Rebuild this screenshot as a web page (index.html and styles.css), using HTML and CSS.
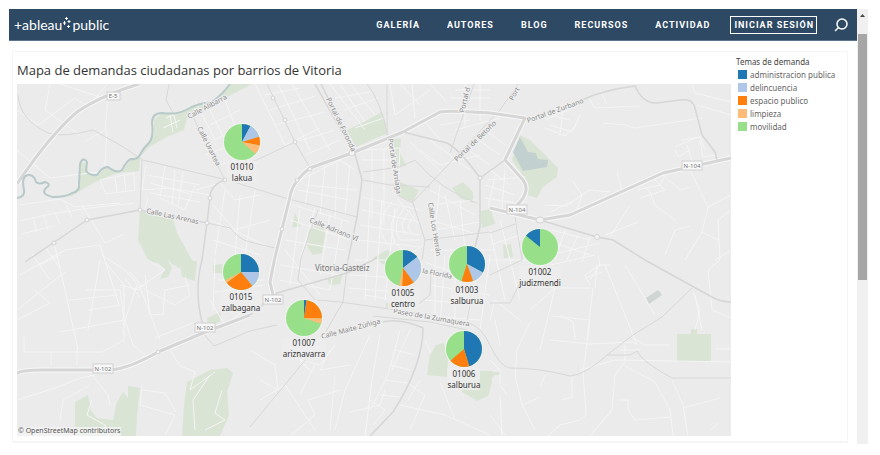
FILE: index.html
```html
<!DOCTYPE html>
<html lang="es">
<head>
<meta charset="utf-8">
<title>Mapa de demandas ciudadanas por barrios de Vitoria</title>
<link rel="stylesheet" href="styles.css">
</head>
<body>
<div class="window">
  <div class="page">
    <header class="topbar">
      <a class="logo" href="#"><span>+ableau</span><svg class="logo-dots" viewBox="0 0 8 12"><path d="M3.500 0v3M2 1.500h3M1.500 4v4M0 6h3M6 3v3M4.500 4.500h3M5.500 8v3M4 9.500h3"/></svg><span>public</span></a>
      <nav class="nav">
        <a href="#">GALERÍA</a>
        <a href="#">AUTORES</a>
        <a href="#">BLOG</a>
        <a href="#">RECURSOS</a>
        <a href="#">ACTIVIDAD</a>
      </nav>
      <button class="signin" type="button">INICIAR SESIÓN</button>
      <button class="search" type="button" aria-label="Buscar"><svg viewBox="0 0 14 14"><circle cx="8" cy="6" r="5"/><path d="M4.500 9.500L1 13"/></svg></button>
    </header>
    <main class="viz">
      <section class="sheet">
        <h1>Mapa de demandas ciudadanas por barrios de Vitoria</h1>
        <svg class="map" viewBox="17 84 714 352" role="img" aria-label="Mapa de Vitoria-Gasteiz">
          <rect class="land" x="17" y="84" width="714" height="352"/>
          <g class="park">
            <path d="M56 197L72 193L79 186L81 163L87 163L88 173L98 175L107 167L122 172L130 160L140 158L139 171L117 173L93 183L72 196Z"/>
            <path d="M140 157L146 146L154 134L154 120L162 113L180 113L197 105L217 100L230 84L252 84L187 118L184 130L167 137L149 147Z"/>
            <path d="M140 210L173 218L177 233L192 260L197 262L195 281L182 277L181 269L172 264L167 258L172 268L168 277L160 279L165 269L158 263L149 262L138 240Z"/>
            <path d="M75 402L88 395L91 410L97 418L113 420L117 402L123 392L128 398L128 386L140 388L137 415L136 436H75Z"/>
            <path d="M187 382L210 370L227 368L233 373L227 392L229 415L220 436H182L184 405Z"/>
            <path d="M347 130L360 124L382 112L388 133L356 147Z"/>
            <path d="M393 138L401 139L400 152L406 166L397 167Z"/>
            <path d="M400 182L419 190L413 202L399 196Z"/>
            <path d="M452 188L463 182L473 192L473 203L460 198Z"/>
            <path d="M480 211L491 209L495 224L482 228Z"/>
            <path d="M295 213L301 227L292 227Z"/>
            <path d="M308 230L318 225L326 228L322 253L313 255L307 247Z"/>
            <path d="M373 258L387 250L392 252L385 265Z"/>
            <path d="M520 135L530 140L558 168L557 177L543 187L537 198L527 195L528 183L512 160Z"/>
            <path d="M503 245L511 244L513 257L504 258Z"/>
            <path d="M677 334H691V329H697V334H711V362H677Z"/>
            <path d="M430 355L436 345L444 343L448 360L447 377L427 375ZM463 371H492V382L488 396L477 401L462 392Z"/>
            <path d="M327 279L343 273L340 284L330 285Z"/>
            <path d="M207 318L221 312L220 322L208 326ZM213 265L223 264V273H213ZM386 303H395V309H386ZM490 372H501V375H494L490 382Z"/>
          </g>
          <path class="lake" d="M520 137L528 152L536 153L538 159L548 160L547 167L523 171L513 152Z"/>
          <path class="block" d="M646 298L658 290L662 295L649 304Z"/>
          <g class="street">
            <path d="M17 110L38 125L75 98L88 107L107 84M17 150L50 178L98 172M50 84L45 110L80 135M107 130L105 165M60 84L100 97M108 98L105 130L85 142"/>
            <path d="M20 221L50 214L90 208L135 203M22 234L52 226M33 218L37 232M44 216L48 230M55 213L60 224M66 205L72 217M82 205L105 243L124 234M100 180L134 173L135 190L106 194ZM115 177L117 192M124 175L126 191M20 205L60 199L75 207L120 203"/>
            <path d="M146 165L142 190L170 188L210 195M147 175L200 185M150 193L200 202M165 166L160 198L185 210L195 185M175 170L172 205M148 198L145 210M183 172L178 206M150 183L190 194"/>
            <path d="M54 243L62 277L78 350M20 275L65 250L100 245L119 305M85 290L120 290L124 320L60 332M70 300L118 295M88 310L120 305M100 260L88 330M32 254L50 280M45 247L60 268M40 265L60 255M17 320L50 303L35 290M65 272L17 310M24 352H102L124 340V285L105 262M51 352V365M77 349V365M24 335V352"/>
            <path d="M102 255L125 270L140 287L160 340M130 272L145 290L175 305L190 295L185 277M140 287L165 270L148 260M137 285L125 320L133 345L145 355M155 338L195 322M120 285L140 290M125 279L140 297M145 275L150 315L165 314M163 315L165 290L190 285M133 290L145 285"/>
            <path d="M17 400L55 388L80 378L95 375M92 375L108 395L110 405M60 420L63 400L90 385M142 385L140 405L175 415L165 435M142 390L165 393L176 412M190 340L170 350L180 366L195 372L190 390L215 372M92 400L87 415L105 425L110 436M195 430L193 400L210 375M222 390L215 413L225 420L205 430"/>
            <path d="M166 118L174 115L177 128M163 128L180 120M170 115L173 132M195 100L215 140L245 125M205 100L230 150L250 140M225 100L250 165M210 125L240 110M205 155L245 140M220 165L250 155M195 190L220 183L235 200L260 195M213 205L235 230L270 220M210 220L265 245M213 240L260 255M225 190L215 255M240 195L235 255M255 190L245 255M218 280H265M215 292L265 285M210 300L225 325L258 300M215 258L213 310"/>
            <path d="M255 84L285 145L320 128M278 84L310 150M292 84L330 150M265 95L300 88M270 110L315 96M275 125L325 112M295 142L335 130M305 155L340 140M330 84L365 130M340 84L365 122M350 84L375 115M335 98L370 92M344 110L378 98M355 128L384 118"/>
            <path d="M300 180L340 160L355 170M298 190L350 200M310 175L305 205M325 165L320 215M337 162L335 220M350 165L345 215M305 185L357 190M293 205L350 222M290 220L350 240M300 210L290 285M315 208L300 260M330 214L320 275M342 220L330 290M285 240L345 250M280 265L340 275M280 280L330 290M285 250L320 295"/>
            <path d="M365 150L400 148L398 200L420 225M372 148V218M384 150V225M362 160H396M362 197L420 210M362 210L420 222M360 225L420 235M358 240L420 247M370 200L365 300M382 200L375 300M395 208L385 300M355 260H420M350 275L400 278M348 288L400 292M365 295L420 305"/>
            <path d="M400 205Q385 225 395 243Q410 260 423 245M405 207Q390 225 400 240L420 240M410 210Q396 226 407 235M415 215Q404 225 412 234M392 202Q372 225 388 245M420 150L440 165L480 155M430 140L470 170M410 142L445 175M430 190L475 215M440 185L435 230L480 222M430 205L475 200M445 195L455 240M460 200L465 250M430 220L480 235"/>
            <path d="M390 84L395 115L430 90M400 84L420 105M412 84L415 118M430 84L445 100M440 125L470 120M455 90H490M450 98H490M465 84V125M480 84V120M425 122L440 140M455 130L500 118M485 130L505 145M475 138L500 155M465 148L490 165M490 170L510 185M485 185L515 195M485 198L515 203M495 175L488 208M505 170L502 208M488 180L525 177"/>
            <path d="M430 250H495M425 262L460 275L490 260M430 285L490 295M435 240V325M445 255L440 325M455 270L455 325M478 270L465 325M490 255L480 330M425 300L480 305M420 315L480 320M490 230L505 300M500 220L520 300M515 220L520 240M490 245L520 235M490 260H530"/>
            <path d="M545 120L575 107M550 125L572 132L580 115M545 128L565 136L577 125M563 108L560 135M548 115L570 120M590 100L595 108L640 106M603 123L625 125L635 128L702 118M600 90L607 104M692 84L695 93L731 102M697 105L731 115"/>
            <path d="M675 147L690 140L702 136M675 150L678 157L690 150M687 145L692 162M700 140L703 157L715 155M682 140L700 137L705 150"/>
            <path d="M572 180L582 195L567 206L545 205M550 212L575 200L590 190L610 192M582 195L577 210M617 172L622 190M637 180L650 192L655 205L676 221M637 190L660 185L665 175M640 198L665 190L655 180M663 175L680 190L690 187M630 205L610 237M638 222L605 235M690 170L708 207L731 195M708 207L702 232L718 240M702 232L685 260M665 255L675 230L690 226M731 210L718 220L720 260L708 270L712 310L731 318M715 260L731 250"/>
            <path d="M552 230L575 236L590 240M555 243L590 255M565 230L555 260M578 235L567 260M590 237L582 262M550 255L600 243M550 265L595 255M520 285L555 288L590 288M530 310L555 288L540 350M560 315L573 322L575 340M552 316L590 320L583 372L586 415L580 420L560 425L548 436M550 340L590 344L633 342L637 345M593 288L587 340M605 265L637 345M625 265L655 315M590 285L585 275L600 265L598 255M585 278L602 272M600 265L590 280M610 265H597L595 288M695 295L702 330M693 293L700 310L695 330"/>
            <path d="M490 320L495 300L522 322M500 345L495 320M490 360L500 370V385L507 395M530 322L517 350L515 375L522 405L535 430M522 405L540 397M500 395L502 436M490 415L505 435M545 375L540 387M572 377V397L562 400M580 370L615 360L731 362M625 362L615 375L612 410L590 436M625 366L655 382L670 410L673 436M620 400H628V410L635 420L670 417M672 380L683 405L688 436M683 408L720 398M711 430L718 423M716 349H731M633 338L645 345H670M625 345V360M620 350H640"/>
            <path d="M250 350L275 365L278 390L260 380M310 340L300 360L320 365L335 345M298 358L312 372L300 362M330 350L320 370L350 365M335 375L330 430M260 400L285 385L315 430M290 436L315 415L308 400L340 390M315 365L300 395M370 335L345 390L335 430M380 335L372 380L365 436M400 330L388 375L370 410M410 330L392 370M350 412L380 405L385 390M370 400L385 410L373 425M395 350L415 355M390 365L410 370M385 380L407 383M380 395L400 397M410 385L425 395L410 430M420 380L408 400M400 405L445 415L490 435M440 382L455 420M425 340L430 352M465 330L480 345L460 370"/>
          </g>
          <g class="minor">
            <path d="M18 95Q20 120 48 133Q63 138 93 130L120 145L143 160L227 180L250 187L285 198L357 217M169 84L166 100L173 113M142 160L140 210M193 117L225 180"/>
            <path d="M207 223L230 228Q240 240 250 242L275 248M250 163L295 142M267 84L295 142L310 168M367 84Q380 100 388 135M474 84L450 153M518 84L500 110L413 202M387 135V84M363 172L400 167L415 160Q440 190 477 203M363 180L390 185L430 187M397 195L413 203L425 240L422 260M425 240L490 232M490 233L515 224M515 217L522 260"/>
            <path d="M203 333L214 346L250 331L277 325M250 427L307 358M301 258L298 280L315 300M301 258L318 210M317 300L340 302L397 310L467 322Q482 327 490 345Q500 367 510 368Q540 368 570 376Q585 375 607 355L633 335L662 317L692 288M607 355H630L637 351Q642 362 672 378H731M325 333L343 302L348 260M490 275L522 260V240M490 303H510L520 283M373 316L430 322L467 330M417 305L430 295L431 270M467 320L472 295"/>
          </g>
          <g class="casing">
            <path d="M17 184Q50 135 77 112Q100 96 139 84"/>
            <path d="M17 373Q24 370 40 370H110Q128 369 158 352L203 333L250 315"/>
            <path d="M273 295L270 282L275 257L290 197Q292 182 310 168L352 153L403 132L440 112Q447 110 490 113L525 118L505 160L523 180Q532 192 515 207V215"/>
            <path d="M490 208L540 220L570 215L663 173L731 158"/>
          </g>
          <g class="main">
            <path d="M17 184Q50 135 77 112Q100 96 139 84"/>
            <path d="M17 373Q24 370 40 370H110Q128 369 158 352L203 333L250 315"/>
            <path d="M273 295L270 282L275 257L290 197Q292 182 310 168L352 153L403 132L440 112Q447 110 490 113L525 118L505 160L523 180Q532 192 515 207V215"/>
            <path d="M490 208L540 220L570 215L663 173L731 158"/>
          </g>
          <g class="second">
            <path d="M250 315L277 293L347 273L377 258"/>
            <path d="M25 262L53 243L87 220L140 210L207 223"/>
            <path d="M225 180Q210 185 210 198L207 223L202 260Q194 290 202 322L204 333"/>
            <path d="M403 132L447 143Q460 150 480 178V227L475 247M480 178L505 160"/>
            <path d="M315 84L352 150M321 84L354 150L362 180L357 217L348 260"/>
            <path d="M540 220L597 237L613 240L645 260L710 296Q720 302 731 302"/>
            <path d="M582 100Q603 90 635 86Q643 104 657 103L680 100Q693 98 695 108L702 135L715 152L717 160"/>
            <path d="M383 322Q400 318 423 328Q423 365 393 412L370 436"/>
          </g>
          <path class="river" d="M17 198Q25 197 24 190Q21 176 28 175Q34 174 36 182Q39 185 45 182Q52 184 46 188Q40 194 53 197Q66 197 72 193Q80 192 79 184L80 164Q83 156 87 162L86 171Q90 176 97 175Q102 167 108 167Q117 174 122 170Q127 160 131 159Q138 160 141 153Q144 147 149 143Q154 137 152 123Q152 113 162 113Q177 115 186 110Q198 103 212 102Q223 94 230 84"/>
          <g class="node">
            <circle cx="140" cy="210" r="2"/><circle cx="87" cy="220" r="2"/><circle cx="54" cy="243" r="2"/><circle cx="225" cy="180" r="2"/><circle cx="210" cy="198" r="2"/><circle cx="207" cy="223" r="2"/><circle cx="158" cy="352" r="2"/><circle cx="297" cy="180" r="2"/><circle cx="310" cy="169" r="2"/><circle cx="352" cy="153" r="3"/><circle cx="480" cy="178" r="2"/><ellipse cx="540" cy="220" rx="4" ry="3"/><circle cx="597" cy="237" r="2.500"/><circle cx="273" cy="98" r="2"/><circle cx="285" cy="120" r="2"/><circle cx="295" cy="142" r="2"/><circle cx="282" cy="229" r="2"/>
          </g>
          <g class="shield">
            <rect x="107" y="92" width="13" height="8"/><text x="113" y="98">E-5</text>
            <rect x="93" y="364" width="20" height="9"/><text x="103" y="371">N-102</text>
            <rect x="195" y="323" width="20" height="9"/><text x="205" y="330">N-102</text>
            <rect x="263" y="295" width="20" height="9"/><text x="273" y="302">N-102</text>
            <rect x="507" y="205" width="20" height="9"/><text x="517" y="212">N-104</text>
            <rect x="682" y="161" width="20" height="9"/><text x="692" y="168">N-104</text>
          </g>
          <g class="road-name">
            <text transform="translate(189 119) rotate(-28)">Calle Alibarra</text>
            <text transform="translate(197 128) rotate(63)">Calle Urartea</text>
            <text transform="translate(146 213) rotate(12)">Calle Las Arenas</text>
            <text transform="translate(326 99) rotate(64)">Portal de Foronda</text>
            <text transform="translate(388 139) rotate(81)">Portal de Arriaga</text>
            <text transform="translate(464 113) rotate(-76)">Portal d</text>
            <text transform="translate(457 162) rotate(-44)">Portal de Betoño</text>
            <text transform="translate(513 101) rotate(-60)">Port</text>
            <text transform="translate(528 123) rotate(-20)">Portal de Zurbano</text>
            <text transform="translate(309 222) rotate(22)">Calle Adriano VI</text>
            <text transform="translate(428 203) rotate(81)">Calle Los Herrán</text>
            <text transform="translate(412 271) rotate(11)">de la Florida</text>
            <text transform="translate(393 313) rotate(10)">Paseo de la Zumaquera</text>
            <text transform="translate(322 339) rotate(-15)">Calle Maite Zúñiga</text>
          </g>
          <text class="city" x="315" y="271">Vitoria-Gasteiz</text>
          <g class="tag-bg"><rect x="227" y="161" width="30" height="22"/><rect x="221" y="291" width="40" height="22"/><rect x="282" y="338" width="44" height="22"/><rect x="388" y="287" width="31" height="22"/><rect x="451" y="284" width="33" height="22"/><rect x="519" y="266" width="42" height="22"/><rect x="447" y="368" width="33" height="22"/></g>
          <g class="halo"><circle cx="242" cy="142" r="19"/><circle cx="241" cy="272" r="19"/><circle cx="304" cy="318" r="19"/><circle cx="403" cy="268" r="19"/><circle cx="467" cy="264" r="19"/><circle cx="540" cy="247" r="19"/><circle cx="464" cy="349" r="19"/></g>
          <g class="pie" transform="translate(242 142)">
            <circle class="mov" r="18"/>
            <path class="adm" d="M0 0V-18A18 18 0 0 1 8.450 -15.890Z"/>
            <path class="del" d="M0 0L8.450 -15.890A18 18 0 0 1 17.210 -5.260Z"/>
            <path class="esp" d="M0 0L17.210 -5.260A18 18 0 0 1 17.670 3.430Z"/>
            <path class="lim" d="M0 0L17.670 3.430A18 18 0 0 1 13.580 11.810Z"/>
          </g>
          <g class="pie" transform="translate(241 272)">
            <circle class="mov" r="18"/>
            <path class="adm" d="M0 0V-18A18 18 0 0 1 18 0Z"/>
            <path class="del" d="M0 0H18A18 18 0 0 1 11.330 13.990Z"/>
            <path class="esp" d="M0 0L11.330 13.990A18 18 0 0 1 -14.380 10.830Z"/>
            <path class="lim" d="M0 0L-14.380 10.830A18 18 0 0 1 -16.040 8.170Z"/>
          </g>
          <g class="pie" transform="translate(304 318)">
            <circle class="mov" r="18"/>
            <path class="adm" d="M0 0V-18A18 18 0 0 1 2.510 -17.820Z"/>
            <path class="esp" d="M0 0L2.510 -17.820A18 18 0 0 1 18 0.600Z"/>
            <path class="lim" d="M0 0L18 0.600A18 18 0 0 1 17.020 5.860Z"/>
          </g>
          <g class="pie" transform="translate(403 268)">
            <circle class="mov" r="18"/>
            <path class="adm" d="M0 0V-18A18 18 0 0 1 14.180 -11.080Z"/>
            <path class="del" d="M0 0L14.180 -11.080A18 18 0 0 1 10.830 14.380Z"/>
            <path class="esp" d="M0 0L10.830 14.380A18 18 0 0 1 -0.940 17.980Z"/>
            <path class="lim" d="M0 0L-0.940 17.980A18 18 0 0 1 -4.050 17.540Z"/>
          </g>
          <g class="pie" transform="translate(467 264)">
            <circle class="mov" r="18"/>
            <path class="adm" d="M0 0V-18A18 18 0 0 1 15.890 8.450Z"/>
            <path class="del" d="M0 0L15.890 8.450A18 18 0 0 1 6.160 16.910Z"/>
            <path class="esp" d="M0 0L6.160 16.910A18 18 0 0 1 -5.560 17.120Z"/>
          </g>
          <g class="pie" transform="translate(540 247)">
            <circle class="mov" r="18"/>
            <path class="adm" d="M0 0L-13.990 -11.330A18 18 0 0 1 0 -18Z"/>
          </g>
          <g class="pie" transform="translate(464 349)">
            <circle class="mov" r="18"/>
            <path class="adm" d="M0 0V-18A18 18 0 0 1 5.260 17.210Z"/>
            <path class="esp" d="M0 0L5.260 17.210A18 18 0 0 1 -13.580 11.810Z"/>
          </g>
          <g class="tag">
            <text x="242" y="170">01010</text><text x="242" y="181">lakua</text>
            <text x="241" y="300">01015</text><text x="241" y="311">zalbagana</text>
            <text x="304" y="346">01007</text><text x="304" y="357">ariznavarra</text>
            <text x="403" y="296">01005</text><text x="403" y="307">centro</text>
            <text x="467" y="293">01003</text><text x="467" y="304">salburua</text>
            <text x="540" y="275">01002</text><text x="540" y="286">judizmendi</text>
            <text x="464" y="377">01006</text><text x="464" y="388">salburua</text>
          </g>
          <rect class="credit-bg" x="17" y="427" width="104" height="9"/>
          <text class="credit" x="18" y="433">© OpenStreetMap contributors</text>
        </svg>
      </section>
      <aside class="legend">
        <h2>Temas de demanda</h2>
        <ul>
          <li><i class="swatch adm"></i>administracion publica</li>
          <li><i class="swatch del"></i>delincuencia</li>
          <li><i class="swatch esp"></i>espacio publico</li>
          <li><i class="swatch lim"></i>limpieza</li>
          <li><i class="swatch mov"></i>movilidad</li>
        </ul>
      </aside>
    </main>
  </div>
  <div class="scrollbar" aria-hidden="true">
    <svg class="arrow" viewBox="0 0 9 25"><path d="M2 8L4.500 5L7 8Z"/></svg>
    <div class="thumb"></div>
    <div class="track"></div>
  </div>
</div>
</body>
</html>
```
FILE: styles.css
```css
:root {
  --adm: #1f77b4;
  --del: #aec7e8;
  --esp: #ff7f0e;
  --lim: #ffbb78;
  --mov: #98df8a;
}
* { box-sizing: border-box; }
body {
  margin: 0;
  background: #fff;
  font-family: "Noto Sans", sans-serif;
  color: #333;
}
.window {
  display: flex;
  padding: 9px 12px 12px 9px;
}
.page { flex: 1; min-width: 0; padding-bottom: 1px; }

.topbar {
  display: flex;
  align-items: center;
  height: 32px;
  padding: 0 9px 0 5px;
  background: #2d4963;
  border-bottom: 1px solid #59748c;
}
.logo {
  display: flex;
  align-items: center;
  margin-right: auto;
  color: #fff;
  font: 14px/20px Lato, sans-serif;
  text-decoration: none;
}
.logo-dots { width: 8px; height: 12px; margin: 0 1px 4px; stroke: #fff; fill: none; }
.nav { display: flex; gap: 27px; margin-right: 20px; }
.nav a, .signin {
  color: #fff;
  font: bold 9px/12px Roboto, sans-serif;
  letter-spacing: 1px;
  text-decoration: none;
}
.signin {
  height: 18px;
  padding: 0 2px 0 3px;
  background: none;
  border: 1px solid #fff;
  white-space: nowrap;
}
.search { margin-left: 17px; padding: 0; border: 0; background: none; display: flex; }
.search svg { width: 14px; height: 14px; fill: none; stroke: #fff; stroke-width: 1.5; }

.viz {
  display: grid;
  grid-template-columns: minmax(0, 1fr) 111px;
  column-gap: 5px;
  margin: 10px 9px 0 3px;
  padding: 0 0 5px 4px;
  border: 1px solid #f5f5f5;
  border-bottom-width: 2px;
}
h1 {
  margin: 0;
  padding-top: 8px;
  font: 400 13px/20px "Open Sans", sans-serif;
  height: 32px;
}
.map { display: block; width: 100%; height: auto; }
.land { fill: #ebebeb; }
.park { fill: #dae4d5; }
.lake { fill: #c2d1d0; }
.block { fill: #ced5d3; }
.street, .minor, .casing, .main, .second, .river { fill: none; stroke-linejoin: round; }
.street { stroke: #f5f5f5; stroke-width: 1; }
.minor { stroke: #d8d8d8; stroke-width: 1; }
.casing { stroke: #f7f7f7; stroke-width: 5; }
.main { stroke: #d6d6d6; stroke-width: 3; }
.second { stroke: #d6d6d6; stroke-width: 1.5; }
.river { stroke: #b7c9c9; stroke-width: 2; }
.node { fill: #f4f4f4; stroke: #d4d4d4; stroke-width: 1; }
.shield rect { fill: #f8f8f8; stroke: #d0d0d0; stroke-width: 1; }
.shield text { font-size: 6px; fill: #777; text-anchor: middle; }
.road-name {
  font-size: 7px;
  fill: #8a8a8a;
  stroke: #f0f0f0;
  stroke-width: 2px;
  paint-order: stroke;
}
.city { font-size: 8px; fill: #777; }
.tag-bg { fill: #eee; fill-opacity: 0.8; }
.halo { fill: #f2f2f2; }
.pie .adm { fill: var(--adm); }
.pie .del { fill: var(--del); }
.pie .esp { fill: var(--esp); }
.pie .lim { fill: var(--lim); }
.pie .mov { fill: var(--mov); }
.tag { font-size: 8px; fill: #333; text-anchor: middle; }
.credit-bg { fill: #f4f4f4; fill-opacity: 0.8; }
.credit { font-size: 7px; fill: #555; }

.legend { padding-top: 3px; color: #666; font-size: 8px; line-height: 13px; }
.legend h2 { margin: 0; font-size: 8px; line-height: 13px; font-weight: 400; color: #444; }
.legend ul { margin: 0; padding: 0; list-style: none; }
.legend li { display: flex; align-items: center; gap: 3px; height: 13px; padding-left: 2px; white-space: nowrap; }
.swatch { width: 9px; height: 9px; }
.swatch.adm { background: var(--adm); }
.swatch.del { background: var(--del); }
.swatch.esp { background: var(--esp); }
.swatch.lim { background: var(--lim); }
.swatch.mov { background: var(--mov); }

.scrollbar {
  display: flex;
  flex-direction: column;
  width: 11px;
  padding: 0 1px;
  background: #f0f0f0;
}
.arrow { display: block; width: 9px; height: 25px; fill: #444; }
.thumb { flex: 3 1 0; background: #a6a6a6; }
.track { flex: 2 1 0; }
```
